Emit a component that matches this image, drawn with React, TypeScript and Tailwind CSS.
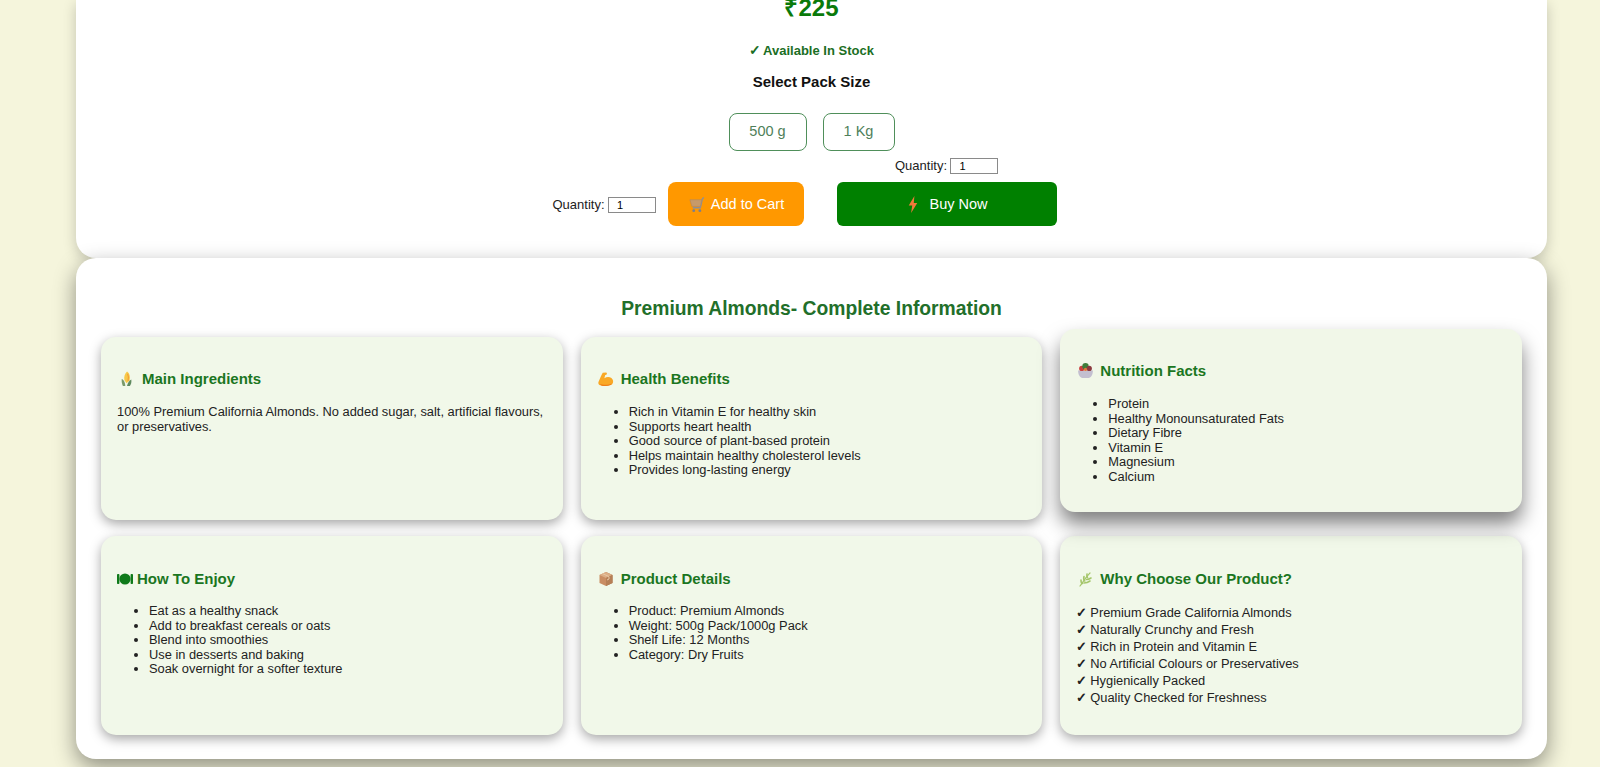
import { FC, ReactNode } from 'react';

const CornIcon = () => (
  <svg viewBox="0 0 16 16" className="ml-px w-[17px] h-[18px] shrink-0">
    <path d="M8.500 1c2.400 1.500 3.200 5 2.400 8.500L8 12 6 9c-.6-3 .4-6 2.500-8z" fill="#f7c948" />
    <path d="M9 3c1 2 1 5 .4 7" stroke="#f29c38" strokeWidth="1" fill="none" />
    <path d="M3.500 8c1.600.6 3 2.400 3.400 6.500H4.600C3.600 12.500 3.300 10.200 3.500 8z" fill="#7a9a6a" />
    <path d="M12.500 8.500c.4 2.300-.1 4.500-1.300 6H8.500c.6-2.800 2-4.800 4-6z" fill="#5f8a5f" />
  </svg>
);

const MuscleIcon = () => (
  <svg viewBox="0 0 18 16" className="ml-px w-[17px] h-[16px] shrink-0">
    <path d="M5 1.500 8.500 1c1 .2 1.200 1.500.6 2.300L7.500 4 6.800 7.200C8.800 5.800 12 5.500 14.200 7c2.200 1.600 2.400 5 .8 6.600-2 1.700-9 2-12.800 1-1.800-.5-2.200-2-1.600-3.600C2 8 3.500 4 5 1.500z" fill="#f9a825" />
    <path d="M2 13c3 1.500 9 1.500 12.500-.2-.6 2-2.500 2.400-6 2.600-3 .1-5.500 0-6.500-2.400z" fill="#ef7f1a" />
  </svg>
);

const SaladIcon = () => (
  <svg viewBox="0 0 16 16" className="ml-px w-[17px] h-[17px] shrink-0">
    <path d="M1 8h14c0 4-2 7-4 7H5C3 15 1 12 1 8z" fill="#c3bfd0" />
    <circle cx="4.500" cy="6" r="2.500" fill="#c9403f" />
    <circle cx="8" cy="4" r="3" fill="#3d7d3a" />
    <circle cx="11.500" cy="6" r="2.500" fill="#8c3a3f" />
    <circle cx="8" cy="7" r="1.500" fill="#e07a3a" />
  </svg>
);

// dinner plate glyph, comes out in the heading colour
const PlateIcon = () => (
  <svg viewBox="0 0 16 12" className="w-[16px] h-[12px] shrink-0" fill="#0f7a1a">
    <circle cx="8" cy="6" r="5.600" />
    <rect x="0" y="1" width="2.400" height="10" rx=".8" />
    <rect x="13.600" y="1" width="2.400" height="10" rx=".8" />
  </svg>
);

const BoxIcon = () => (
  <svg viewBox="0 0 16 16" className="ml-px w-[16px] h-[16px] shrink-0">
    <path d="M8 1l6.500 3v8L8 15z" fill="#a8714a" />
    <path d="M8 1 1.500 4v8L8 15z" fill="#c98d63" />
    <path d="M1.500 4 8 7l6.500-3L8 1z" fill="#dcae86" />
    <path d="M8 7v8l6.500-3V4z" fill="#b67f56" />
    <path d="M4.500 2.600l6.500 3V8l-2 1" stroke="#e6c7a5" strokeWidth="1" fill="none" />
  </svg>
);

const HerbIcon = () => (
  <svg viewBox="0 0 16 16" className="ml-px w-[16px] h-[16px] shrink-0" fill="none" stroke="#a5c66b" strokeLinecap="round">
    <path d="M3 15C6 11 9 6 13 2" strokeWidth="1.200" />
    <path d="M4 9c0 2 .5 3.500 1.500 3.500M7 5.500c-.5 2 0 4 .8 4.500M10 3c-.3 1.500 0 3 .5 3.500" strokeWidth="1.600" />
    <path d="M7 12c2 0 4-.5 6-2M9.500 8.500c1.500 0 3-.5 4.500-1.500" strokeWidth="1.600" />
  </svg>
);

const CartIcon = () => (
  <svg viewBox="0 0 18 18" className="w-[17px] h-[17px] shrink-0">
    <path d="M15.500 1.500 14 3.500l-2 9H4" stroke="#8a8f9c" strokeWidth="1.500" fill="none" />
    <path d="M1 4h12.500l-1.500 7H3z" fill="#c79a6a" stroke="#b08660" strokeWidth=".6" />
    <circle cx="5" cy="15.500" r="1.500" fill="#7c7f8c" />
    <circle cx="11.500" cy="15.500" r="1.500" fill="#7c7f8c" />
  </svg>
);

const BoltIcon = () => (
  <svg viewBox="0 0 10 18" className="w-[10px] h-[17px] shrink-0">
    <path d="M6.500 0 .5 10h3.700L3 18l6.500-10.500H5.800z" fill="#f0793a" />
  </svg>
);

const Quantity: FC = () => (
  <label className="flex items-center gap-[3px] text-[13px] text-[#222]">
    Quantity:
    <input
      type="number"
      defaultValue={1}
      className="w-[48px] h-[16px] bg-white border border-[#8a8a8a] text-[11px] text-center text-black pr-[8px] [appearance:textfield]"
    />
  </label>
);

const Check: FC = () => <span className="inline-block w-[14px] font-bold">✓</span>;

const InfoCard: FC<{ icon: ReactNode; title: string; gap?: string; lifted?: boolean; lower?: boolean; children: ReactNode }> = ({
  icon,
  title,
  gap = 'gap-[6px]',
  lifted,
  lower,
  children,
}) => (
  <div
    className={
      lifted
        ? 'rounded-[15px] bg-[#f1f7e8] px-[16px] pt-[33px] -translate-y-2 shadow-[0_12px_20px_rgba(0,0,0,0.5)]'
        : 'rounded-[15px] bg-[#f1f8e9] px-[16px] pt-[33px] shadow-[0_4px_12px_rgba(0,0,0,0.35)]'
    }
  >
    <h3 className={`flex items-center ${gap} h-[17px] text-[15px] leading-[17px] font-bold text-[#1b761f] ${lower ? 'translate-y-px' : ''}`}>
      {icon}
      {title}
    </h3>
    <div className="mt-[18px] text-[12.850px] leading-[14.500px] text-[#222]">{children}</div>
  </div>
);

const Bullets: FC<{ items: string[] }> = ({ items }) => (
  <ul className="list-disc pl-[32px]">
    {items.map((item) => (
      <li key={item}>{item}</li>
    ))}
  </ul>
);

export default function App() {
  return (
    <div className="h-[767px] overflow-hidden bg-[#f5f5dc] font-['Liberation_Sans',Arial,sans-serif]">
      <div className="ml-[76px] w-[1471px]">
        {/* Product summary, scrolled so the top is off screen */}
        <div className="h-[258px] rounded-b-[20px] bg-white shadow-[0_4px_14px_rgba(0,0,0,0.2)] flex flex-col items-center">
          <div className="-mt-[6px] text-[24px] leading-[28px] font-bold text-[#0a7a0a]">₹225</div>
          <div className="mt-[21px] text-[13px] leading-[14px] font-bold text-[#1b6e24]">
            <span className="inline-block w-[14px] font-bold text-[14px]">✓</span>Available In Stock
          </div>
          <div className="mt-[15px] text-[15px] leading-[18px] font-bold text-[#111]">Select Pack Size</div>
          <div className="mt-[22px] flex gap-[16px]">
            <button className="w-[78px] h-[38px] rounded-[8px] border border-[#4f8f5a] text-[14.500px] text-[#4f7f5a]">500 g</button>
            <button className="w-[72px] h-[38px] rounded-[8px] border border-[#4f8f5a] text-[14.500px] text-[#4f7f5a]">1 Kg</button>
          </div>
          <div className="mt-[5px] flex items-end gap-[33px] mr-[14px]">
            <div className="flex items-center gap-[12px]">
              <div className="pt-[3px]">
                <Quantity />
              </div>
              <button className="w-[136px] h-[44px] pt-[2px] pl-[2px] rounded-[8px] bg-[#ff9800] text-white text-[14.500px] flex items-center justify-center gap-[5px]">
                <CartIcon />
                Add to Cart
              </button>
            </div>
            <div className="flex flex-col items-center gap-[6px]">
              <Quantity />
              <button className="w-[220px] h-[44px] pt-[2px] pl-[2px] rounded-[6px] bg-[#008000] text-white text-[14.500px] flex items-center justify-center gap-[12px]">
                <BoltIcon />
                Buy Now
              </button>
            </div>
          </div>
        </div>

        {/* Complete information */}
        <div className="h-[501px] rounded-[20px] bg-white px-[25px] pt-[39px] shadow-[0_8px_22px_rgba(0,0,0,0.42)]">
          <h2 className="text-center text-[19.300px] leading-[24px] font-bold text-[#226f2a]">
            Premium Almonds- Complete Information
          </h2>
          <div className="mt-[16px] grid grid-cols-3 grid-rows-[183px_199px] gap-x-[18px] gap-y-[16px]">
            <InfoCard icon={<CornIcon />} title="Main Ingredients" gap="gap-[7px]">
              <p>100% Premium California Almonds. No added sugar, salt, artificial flavours, or preservatives.</p>
            </InfoCard>
            <InfoCard icon={<MuscleIcon />} title="Health Benefits">
              <Bullets
                items={[
                  'Rich in Vitamin E for healthy skin',
                  'Supports heart health',
                  'Good source of plant-based protein',
                  'Helps maintain healthy cholesterol levels',
                  'Provides long-lasting energy',
                ]}
              />
            </InfoCard>
            <InfoCard icon={<SaladIcon />} title="Nutrition Facts" lifted>
              <Bullets items={['Protein', 'Healthy Monounsaturated Fats', 'Dietary Fibre', 'Vitamin E', 'Magnesium', 'Calcium']} />
            </InfoCard>
            <InfoCard icon={<PlateIcon />} title="How To Enjoy" gap="gap-[4px]" lower>
              <Bullets
                items={[
                  'Eat as a healthy snack',
                  'Add to breakfast cereals or oats',
                  'Blend into smoothies',
                  'Use in desserts and baking',
                  'Soak overnight for a softer texture',
                ]}
              />
            </InfoCard>
            <InfoCard icon={<BoxIcon />} title="Product Details" gap="gap-[7px]" lower>
              <Bullets
                items={[
                  'Product: Premium Almonds',
                  'Weight: 500g Pack/1000g Pack',
                  'Shelf Life: 12 Months',
                  'Category: Dry Fruits',
                ]}
              />
            </InfoCard>
            <InfoCard icon={<HerbIcon />} title="Why Choose Our Product?" gap="gap-[7px]" lower>
              <div className="leading-[17.100px]">
                <p><Check />Premium Grade California Almonds</p>
                <p><Check />Naturally Crunchy and Fresh</p>
                <p><Check />Rich in Protein and Vitamin E</p>
                <p><Check />No Artificial Colours or Preservatives</p>
                <p><Check />Hygienically Packed</p>
                <p><Check />Quality Checked for Freshness</p>
              </div>
            </InfoCard>
          </div>
        </div>
      </div>
    </div>
  );
}
